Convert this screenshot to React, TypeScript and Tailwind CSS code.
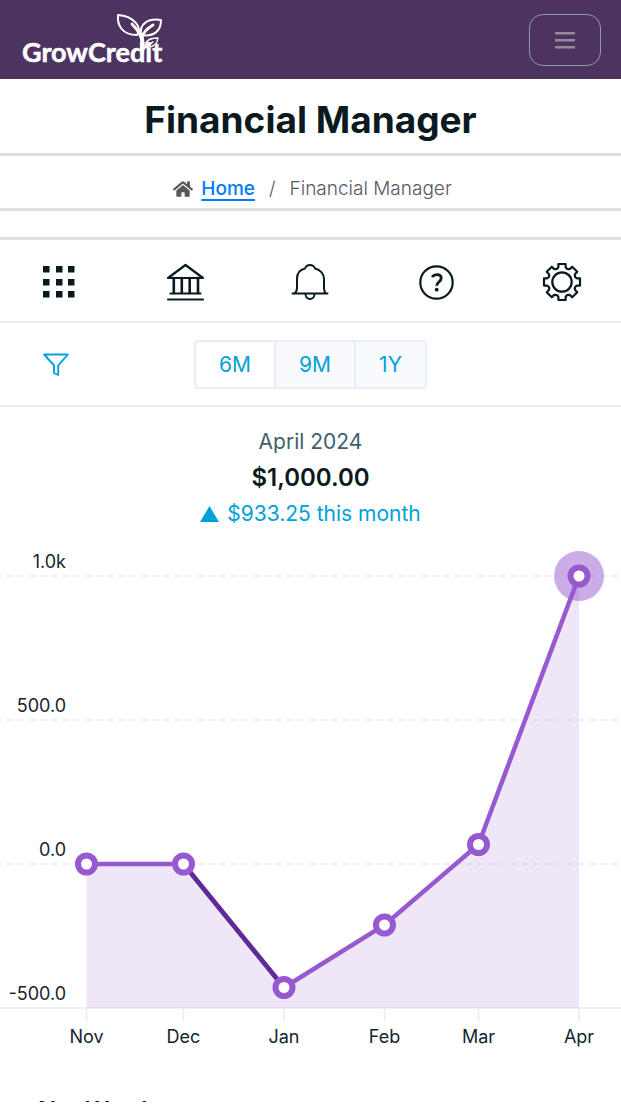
import React from 'react'
import { FaHome } from 'react-icons/fa'

interface Point {
  month: string
  x: number
  y: number
}

const points: Point[] = [
  { month: 'Nov', x: 86.5, y: 324 },
  { month: 'Dec', x: 183.5, y: 324 },
  { month: 'Jan', x: 284, y: 447.5 },
  { month: 'Feb', x: 384.5, y: 385 },
  { month: 'Mar', x: 478.5, y: 304.5 },
  { month: 'Apr', x: 579, y: 36 },
]

const levels = [
  { label: '1.0k', y: 36 },
  { label: '500.0', y: 180 },
  { label: '0.0', y: 324 },
  { label: '-500.0', y: 468 },
]

const ranges = ['6M', '9M', '1Y']

// one tooth every 45 degrees, joined along the inner rim
const gearPath = () => {
  const corners = [
    [-4.6, -13.4],
    [-3.6, -15],
    [-3.6, -18],
    [3.6, -18],
    [3.6, -15],
    [4.6, -13.4],
  ]
  const all: string[] = []
  for (let i = 0; i < 8; i++) {
    const a = (i * Math.PI) / 4
    corners.forEach(([x, y]) => {
      const px = 20 + x * Math.cos(a) - y * Math.sin(a)
      const py = 20 + x * Math.sin(a) + y * Math.cos(a)
      all.push(`${px.toFixed(2)} ${py.toFixed(2)}`)
    })
  }
  return `M${all.join('L')}Z`
}

const Logo: React.FC = () => (
  <svg width="150" height="56" viewBox="0 0 150 56" fill="none" role="img" aria-label="GrowCredit">
    <text x="0" y="50" fontSize="27" className="fill-white font-[Lato] font-bold" stroke="white" strokeWidth="0.5">
      GrowCredit
    </text>
    <g stroke="white" strokeWidth="2" strokeLinejoin="round" strokeLinecap="round">
      <path d="M96 3c-1 10 4 20 19 20 6-8-4-19-19-20z" />
      <path d="M119 23c-2-11 7-17 20-15 0 11-7 17-20 15z" />
      <path d="M110 12c4 4 7 8 9 13M131 13c-5 3-9 6-11 12" strokeWidth="2.8" />
      <path d="M119 23c2 6 2 11 1 17" strokeWidth="4" />
      <path d="M123 35c0-7 5-9 13-9-1 7-5 10-13 9zM121 38c3-4 6-6 10-8" strokeWidth="1.4" />
    </g>
  </svg>
)

const GridIcon = () => (
  <svg width="40" height="40" viewBox="0 0 40 40" fill="currentColor">
    {[4, 17, 29].map((y) =>
      [4, 17, 29].map((x) => <rect key={`${x}-${y}`} x={x} y={y} width="6.5" height="6.5" />)
    )}
  </svg>
)

const BankIcon = () => (
  <svg width="40" height="40" viewBox="0 0 40 40" fill="none" stroke="currentColor" strokeWidth="2.200" strokeLinecap="round" strokeLinejoin="round">
    <path d="M20.500 3L3 16H38ZM5.500 31.500H35.500M3 37.500H38" />
    <path d="M8.800 16V31M16.800 16V31M24.700 16V31M33 16V31" strokeWidth="2.600" />
  </svg>
)

const BellIcon = () => (
  <svg width="40" height="40" viewBox="0 0 40 40" fill="none" stroke="currentColor" strokeWidth="2" strokeLinecap="round" strokeLinejoin="round">
    <path d="M1.500 31.500H36.500M3 31.500C5.500 30 6 29 6 26V17C6 11.500 9 7.500 14 6.500C15 4 17 3 19 3S23 4 24 6.500C29 7.500 33 11.500 33 17V26C33 29 33.500 30 35 31.500" />
    <path d="M14.500 32C14.500 35 16.500 37 19 37S23.500 35 23.500 32" />
  </svg>
)

const HelpIcon = () => (
  <svg width="40" height="40" viewBox="0 0 40 40" fill="none" stroke="currentColor" strokeWidth="2.200">
    <circle cx="20.500" cy="20.500" r="16.200" />
    <path d="M16 15C17.500 13 19 12.700 20.800 12.700C23.500 12.700 25.200 14.200 25.200 16.300C25.200 19.700 20.700 19.800 20.700 23.800" strokeWidth="2.800" />
    <circle cx="20.700" cy="27.700" r="1.900" fill="currentColor" stroke="none" />
  </svg>
)

const GearIcon = () => (
  <svg width="40" height="40" viewBox="0 0 40 40" fill="none" stroke="currentColor" strokeWidth="2.200" strokeLinejoin="round">
    <path d={gearPath()} />
    <circle cx="20" cy="20" r="9.700" />
  </svg>
)

const tools = [
  { name: 'Overview', Icon: GridIcon },
  { name: 'Accounts', Icon: BankIcon },
  { name: 'Alerts', Icon: BellIcon },
  { name: 'Help', Icon: HelpIcon },
  { name: 'Settings', Icon: GearIcon },
]

const BalanceChart: React.FC = () => {
  const line = points.map((p) => `${p.x},${p.y}`).join(' ')
  const last = points[points.length - 1]

  return (
    <svg className="block w-full" viewBox="0 0 621 520" fill="none" role="img" aria-label="Balance by month">
      <g stroke="#e8ebf5" strokeWidth="1.500">
        {levels.slice(0, 3).map((l) => (
          <path key={l.label} d={`M-4 ${l.y}H621`} strokeDasharray="6 5.200" />
        ))}
        <path d="M0 468H621" />
        {points.map((p) => (
          <path key={p.month} d={`M${p.x} 468V481`} />
        ))}
      </g>
      <polygon points={`86.500,468 ${line} 579,468`} fill="#8f50cc" fillOpacity="0.140" />
      <circle cx={last.x} cy={last.y} r="25" fill="#9759cf" fillOpacity="0.500" />
      <polyline points={line} stroke="#9759cf" strokeWidth="4.500" />
      <path d="M183.500 324L284 447.500" stroke="#5f2a96" strokeWidth="4.500" />
      {points.map((p) => (
        <circle key={p.month} cx={p.x} cy={p.y} r="8.500" fill="white" stroke="#9759cf" strokeWidth="6" />
      ))}
      <g fontSize="18" className="fill-[#14252e] font-[Inter]">
        {levels.map((l) => (
          <text key={l.label} x="66" y={l.y - 8} textAnchor="end">
            {l.label}
          </text>
        ))}
        {points.map((p) => (
          <text key={p.month} x={p.x} y="503" textAnchor="middle">
            {p.month}
          </text>
        ))}
      </g>
    </svg>
  )
}

const App: React.FC = () => {
  return (
    <div className="h-screen overflow-hidden border-b-2 border-white bg-white font-[Inter,sans-serif] text-[#0b1a20]">
      <header className="flex items-center justify-between bg-[#4d3460] pt-3 pr-5 pb-[11px] pl-[22px]">
        <a href="#">
          <Logo />
        </a>
        <button
          aria-label="Menu"
          className="flex h-[52px] w-[72px] items-center justify-center rounded-[14px] border border-[#8f9ba5] text-[#958c9a]"
        >
          <svg width="20" height="18" viewBox="0 0 20 18" fill="currentColor">
            <path d="M0 1h20v2.500H0zM0 8h20v2.500H0zM0 15h20v2.500H0z" />
          </svg>
        </button>
      </header>

      <div className="border-b-[3px] border-[#d9e0e4] pt-5 pb-3 text-center">
        <h1 className="text-[37px] leading-[42px] font-bold">Financial Manager</h1>
      </div>

      <nav
        aria-label="Breadcrumb"
        className="flex items-center justify-center border-b-[3px] border-[#d9e0e4] pt-[21px] pb-[7px] pl-1 text-[19px] leading-6 text-[#55595e]"
      >
        <FaHome className="mr-2 text-[20px]" />
        <a href="#" className="font-medium text-[#007bff] underline decoration-2 underline-offset-4">
          Home
        </a>
        <span className="mx-3.5 font-light">/</span>
        <span className="font-light">Financial Manager</span>
      </nav>

      <div className="h-[29px] border-b-[3px] border-[#d9e0e4]" />

      <nav
        aria-label="Tools"
        className="flex justify-between border-b-2 border-[#e8eef5] px-[39px] pt-[22px] pb-[19px]"
      >
        {tools.map(({ name, Icon }) => (
          <button key={name} aria-label={name}>
            <Icon />
          </button>
        ))}
      </nav>

      <div className="grid grid-cols-[1fr_auto_1fr] items-center border-b-2 border-[#e8eef5] pt-[17px] pb-4 text-[#00a1d9]">
        <button aria-label="Filter" className="ml-[43px] justify-self-start">
          <svg width="26" height="24" viewBox="0 0 26 24" fill="none" stroke="currentColor" strokeWidth="1.900" strokeLinejoin="round">
            <path d="M1.200 1.500H24.800L15.200 12.500V22L11 20V12.500Z" />
          </svg>
        </button>
        <div className="flex divide-x-2 divide-[#e8eef5] overflow-hidden rounded border-2 border-[#e8eef5] text-[21px] leading-[45px]">
          {ranges.map((range, i) => (
            <button key={range} className={i === 0 ? 'px-[23px]' : 'bg-[#f9fafd] px-[23px]'}>
              {range}
            </button>
          ))}
        </div>
      </div>

      <section className="pt-[21px] text-center">
        <p className="text-[21px] leading-7 text-[#3f5f70]">April 2024</p>
        <p className="mt-1 text-2xl leading-9 font-semibold">$1,000.00</p>
        <p className="mt-1 flex items-center justify-center gap-2 text-[21px] leading-7 text-[#00a1d9]">
          <svg width="19" height="16" viewBox="0 0 19 16" fill="currentColor">
            <path d="M9.500 0L19 16H0z" />
          </svg>
          $933.25 this month
        </p>
      </section>

      <section className="mt-3">
        <BalanceChart />
      </section>

      <section className="mt-[35px] px-[38px]">
        <h2 className="text-2xl font-semibold">Net Worth</h2>
      </section>
    </div>
  )
}

export default App
